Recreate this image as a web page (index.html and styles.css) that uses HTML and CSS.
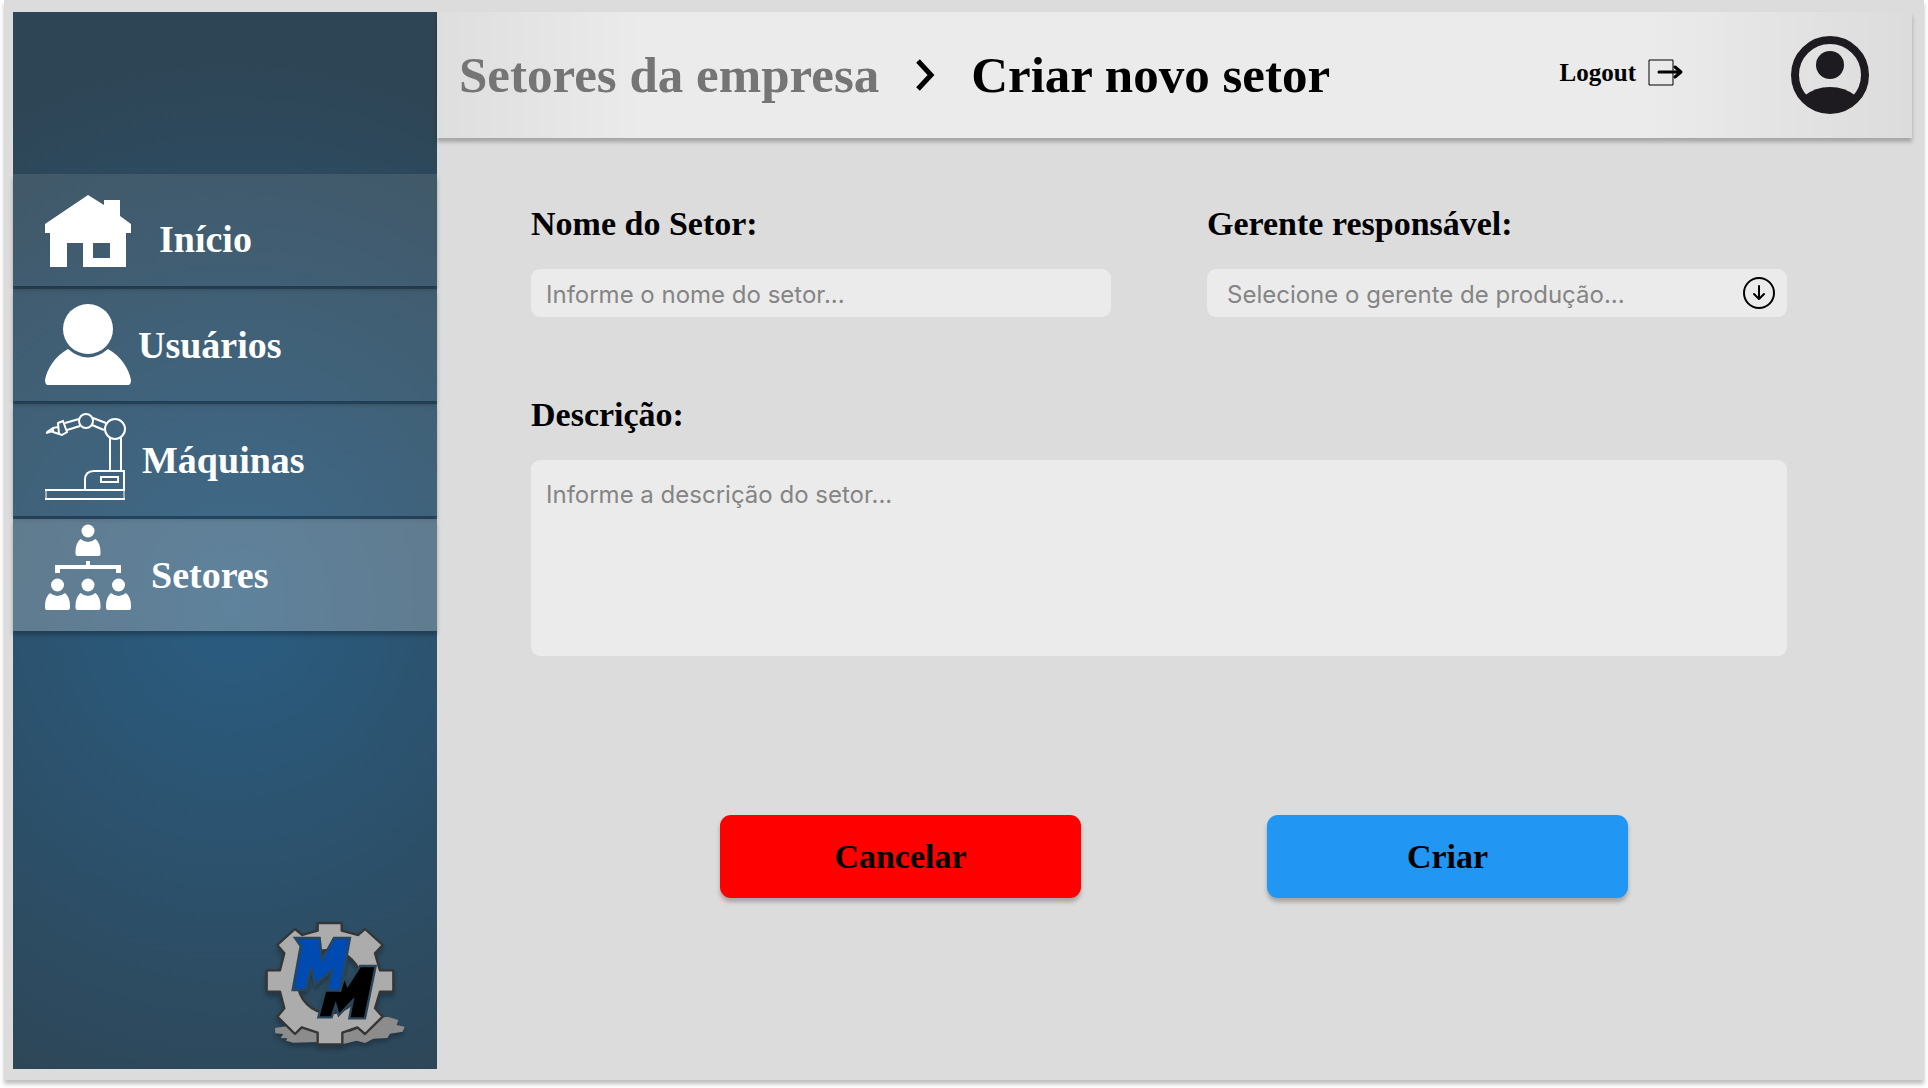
FILE: index.html
```html
<!DOCTYPE html>
<html lang="pt-BR">
<head>
<meta charset="utf-8">
<meta name="viewport" content="width=device-width, initial-scale=1">
<title>Criar novo setor</title>
<link rel="stylesheet" href="styles.css">
</head>
<body>
<div class="app">
  <aside class="sidebar">
    <nav class="menu" aria-label="Principal">
      <a class="menu-item menu-item-home" href="#inicio">
        <svg class="menu-icon" viewBox="0 -1 86 86" aria-hidden="true"><path fill="#fff" fill-rule="evenodd" d="M0 36 43 7 59 17V12H75V28L86 36V45H81V79H38V55H22V79H5V45H0ZM48 55V70H65V55Z"/></svg>
        <span>Início</span>
      </a>
      <a class="menu-item menu-item-users" href="#usuarios">
        <svg class="menu-icon" viewBox="0 -1 86 86" aria-hidden="true"><circle cx="43" cy="26" r="25" fill="#fff"/><path fill="#fff" d="M23 46Q43 63 63 46C76 53 84 66 86 77Q86 82 83 82H3Q0 82 0 77C2 66 10 53 23 46Z"/></svg>
        <span>Usuários</span>
      </a>
      <a class="menu-item menu-item-machines" href="#maquinas">
        <svg class="menu-icon" viewBox="0 4 86 86" aria-hidden="true"><g fill="none" stroke="#fff" stroke-width="2"><circle cx="41" cy="8" r="7"/><circle cx="70" cy="16" r="10"/><path d="M34 6 20 10M35 13 22 17M48 5 61 10M47 12 59 17M65 25V57M76 25V57M13 10 18 8 22 19 17 22 14 21ZM13 14 8 15 8 19 14 21M1 20 8 18M2 19 8 15"/><path d="M40 77V67Q40 58 49 58H79V77M56 64H73V69H56Z" stroke-width="2"/><path d="M0 77H80M0 86H80" stroke-width="2"/><path d="M1 77V86M79 77V86" stroke-width="1"/></g></svg>
        <span>Máquinas</span>
      </a>
      <a class="menu-item menu-item-sectors menu-item-active" href="#setores" aria-current="page">
        <svg class="menu-icon" viewBox="0 8 86 86" aria-hidden="true"><defs><g id="person"><circle cx="12.500" cy="7" r="6.500"/><path d="M5 15Q12.500 21 20 15Q25 19 25 28V30Q25 32 23 32H2Q0 32 0 30V28Q0 19 5 15Z"/></g></defs><g fill="#fff"><use href="#person" x="30.500"/><use href="#person" y="54"/><use href="#person" x="30.500" y="54"/><use href="#person" x="61" y="54"/><path d="M41 37H45V41H76V49H71V45H15V49H10V41H41Z"/></g></svg>
        <span>Setores</span>
      </a>
    </nav>
    <svg class="logo" viewBox="51 33 420 384" role="img" aria-label="MM">
      <path fill="#8c8c8c" d="M75 354 115 348 180 350 300 365 350 345 395 322 415 321 445 330 440 345 464 350 458 365 420 371 412 384 370 386 345 399 320 392 280 402 203 396 130 398 108 392 112 385 92 384 100 372 76 370Z"/>
      <path fill="#acacac" stroke="#353535" stroke-width="7" stroke-linejoin="round" fill-rule="evenodd" d="M203 39H275V62L325 75 345 57 398 105 375 130 390 181H430V245H390L375 295 398 320 345 372 322 352 277 368V403H203V368L155 352 135 372 82 320 103 295 90 245H50V181H90L103 130 82 105 135 57 157 75 203 62ZM238 120A95 95 0 1 0 238 310A95 95 0 1 0 238 120Z"/>
      <path fill="#000" stroke="#29465a" stroke-width="7" d="M230 225 270 242 284 200 293 226 330 168H377L345 325H298L308 272 266 316 257 285 245 322H205Z"/>
      <path fill="#004bb1" stroke="#29465a" stroke-width="7" d="M135 84H209L216 148 252 84H300L271 242H231L245 182 195 224 184 175 168 240H128L152 108Z"/>
    </svg>
  </aside>
  <div class="page">
    <header class="topbar">
      <nav class="breadcrumb" aria-label="Localização">
        <a class="breadcrumb-parent" href="#setores">Setores da empresa</a>
        <svg class="chevron" viewBox="0 0 20 32" aria-hidden="true"><path d="M3 2 16 16 3 30" fill="none" stroke="#000" stroke-width="5"/></svg>
        <h1 class="title">Criar novo setor</h1>
      </nav>
      <button class="logout" type="button">Logout
        <svg class="logout-icon" viewBox="0 0 36 28" aria-hidden="true"><path d="M1 1V26H25" fill="none" stroke="#000" stroke-width="1"/><path d="M1 1H25V26" fill="none" stroke="#000" stroke-width="1"/><path d="M11 13H32M27 8 33 13 27 18" fill="none" stroke="#000" stroke-width="3" stroke-linecap="round" stroke-linejoin="round"/></svg>
      </button>
      <button class="profile" type="button" aria-label="Perfil">
        <svg class="profile-icon" viewBox="0 0 80 80" aria-hidden="true"><circle cx="40" cy="40" r="35" fill="none" stroke="#1d1b20" stroke-width="8"/><circle cx="40" cy="30" r="14" fill="#1d1b20"/><path fill="#1d1b20" d="M14 61Q25 52 40 52T66 61Q56 76 40 76T14 61Z"/></svg>
      </button>
    </header>
    <main>
      <form class="form">
        <div class="field">
          <label for="nome">Nome do Setor:</label>
          <input class="control" id="nome" type="text" placeholder="Informe o nome do setor...">
        </div>
        <div class="field">
          <label for="gerente">Gerente responsável:</label>
          <div class="select-box">
            <select class="control" id="gerente"><option>Selecione o gerente de produção...</option></select>
            <svg class="select-icon" viewBox="0 0 32 32" aria-hidden="true"><g fill="none" stroke="#000" stroke-width="2" stroke-linecap="round" stroke-linejoin="round"><circle cx="16" cy="16" r="15"/><path d="M16 9V22M11 17 16 22 21 17"/></g></svg>
          </div>
        </div>
        <div class="field field-wide">
          <label for="descricao">Descrição:</label>
          <textarea class="control" id="descricao" placeholder="Informe a descrição do setor..."></textarea>
        </div>
        <div class="actions">
          <button class="button button-cancel" type="button">Cancelar</button>
          <button class="button button-create" type="submit">Criar</button>
        </div>
      </form>
    </main>
  </div>
</div>
</body>
</html>
```
FILE: styles.css
```css
* { box-sizing: border-box; }

body {
  margin: 0;
  padding: 0 4px 8px;
  min-height: 100vh;
  display: flex;
  background: #fff;
  color: #000;
  font-family: "Liberation Serif", serif;
  font-weight: 700;
}

button, a { font: inherit; color: inherit; text-decoration: none; }
button { border: 0; padding: 0; background: none; cursor: pointer; }
svg { display: block; flex: none; overflow: visible; }

.app {
  flex: 1;
  display: grid;
  grid-template-columns: 424px 1fr;
  padding: 12px 12px 11px 9px;
  background: #dcdcdc;
  box-shadow: 0 4px 4px rgba(0, 0, 0, 0.25);
}

.sidebar {
  display: flex;
  flex-direction: column;
  justify-content: space-between;
  padding: 162px 0 20px;
  background: radial-gradient(ellipse 120% 52% at 52% 56%, #2a5d82, #2e4555);
}

.menu { display: grid; gap: 3px; }

.menu-item {
  height: 112px;
  display: flex;
  align-items: center;
  padding-left: 32px;
  background: rgba(217, 217, 217, 0.12);
  box-shadow: 0 4px 4px rgba(0, 0, 0, 0.25);
  color: #fff;
  font-size: 38px;
  line-height: 44px;
}

.menu-item-active { background: rgba(217, 217, 217, 0.3); }
.menu-item-home { gap: 28px; }
.menu-item-home span { padding-top: 18px; }
.menu-item-users { gap: 7px; }
.menu-item-machines { gap: 11px; }
.menu-item-sectors { gap: 20px; }
.menu-icon { width: 86px; height: 86px; }

.logo {
  width: 140px;
  height: 128px;
  align-self: flex-end;
  margin-right: 30px;
  filter: drop-shadow(0 4px 2px rgba(0, 0, 0, 0.25));
}

.topbar {
  height: 126px;
  display: flex;
  align-items: center;
  padding: 0 42px 0 22px;
  background: linear-gradient(90deg, #dedede, #ebebeb 14%, #ebebeb 82%, #dcdcdc);
  box-shadow: 0 4px 4px rgba(0, 0, 0, 0.25);
}

.breadcrumb {
  display: flex;
  align-items: center;
  gap: 36px;
  margin-right: auto;
  font-size: 51px;
  line-height: 60px;
  white-space: nowrap;
}

.breadcrumb-parent { color: #757575; }
.title { margin: 0; font: inherit; }
.chevron { width: 20px; height: 32px; }

.logout {
  display: flex;
  align-items: center;
  gap: 12px;
  margin-right: 106px;
  padding-bottom: 4px;
  font-size: 25px;
  line-height: 32px;
}

.logout-icon { width: 36px; height: 28px; }
.profile-icon { width: 80px; height: 80px; }

.form {
  display: grid;
  grid-template-columns: 1fr 1fr;
  column-gap: 96px;
  row-gap: 76px;
  padding: 64px 125px 0 94px;
}

.field { display: grid; gap: 23px; }
.field-wide { grid-column: 1 / -1; }

label {
  font-size: 34px;
  line-height: 44px;
}

.control {
  display: block;
  width: 100%;
  height: 48px;
  border: 0;
  border-radius: 9px;
  padding: 2px 15px 0;
  background: #ebebeb;
  color: #858585;
  font: 400 24px/32px Inter, sans-serif;
}

.control::placeholder { color: #858585; opacity: 1; }

textarea.control {
  height: 196px;
  padding: 19px 15px;
  resize: none;
}

.select-box { display: grid; align-items: center; }
.select-box > * { grid-area: 1 / 1; }
select.control { appearance: none; padding: 3px 20px 0; }
.select-icon {
  width: 32px;
  height: 32px;
  justify-self: end;
  margin-right: 12px;
  pointer-events: none;
}

.actions {
  grid-column: 1 / -1;
  display: flex;
  justify-content: center;
  gap: 186px;
  padding: 83px 0 0 30px;
}

.button {
  width: 361px;
  height: 83px;
  border-radius: 11px;
  box-shadow: 0 4px 4px rgba(0, 0, 0, 0.25);
  font-size: 34px;
}

.button-cancel { background: #f00; }
.button-create { background: #2196f3; }
```
